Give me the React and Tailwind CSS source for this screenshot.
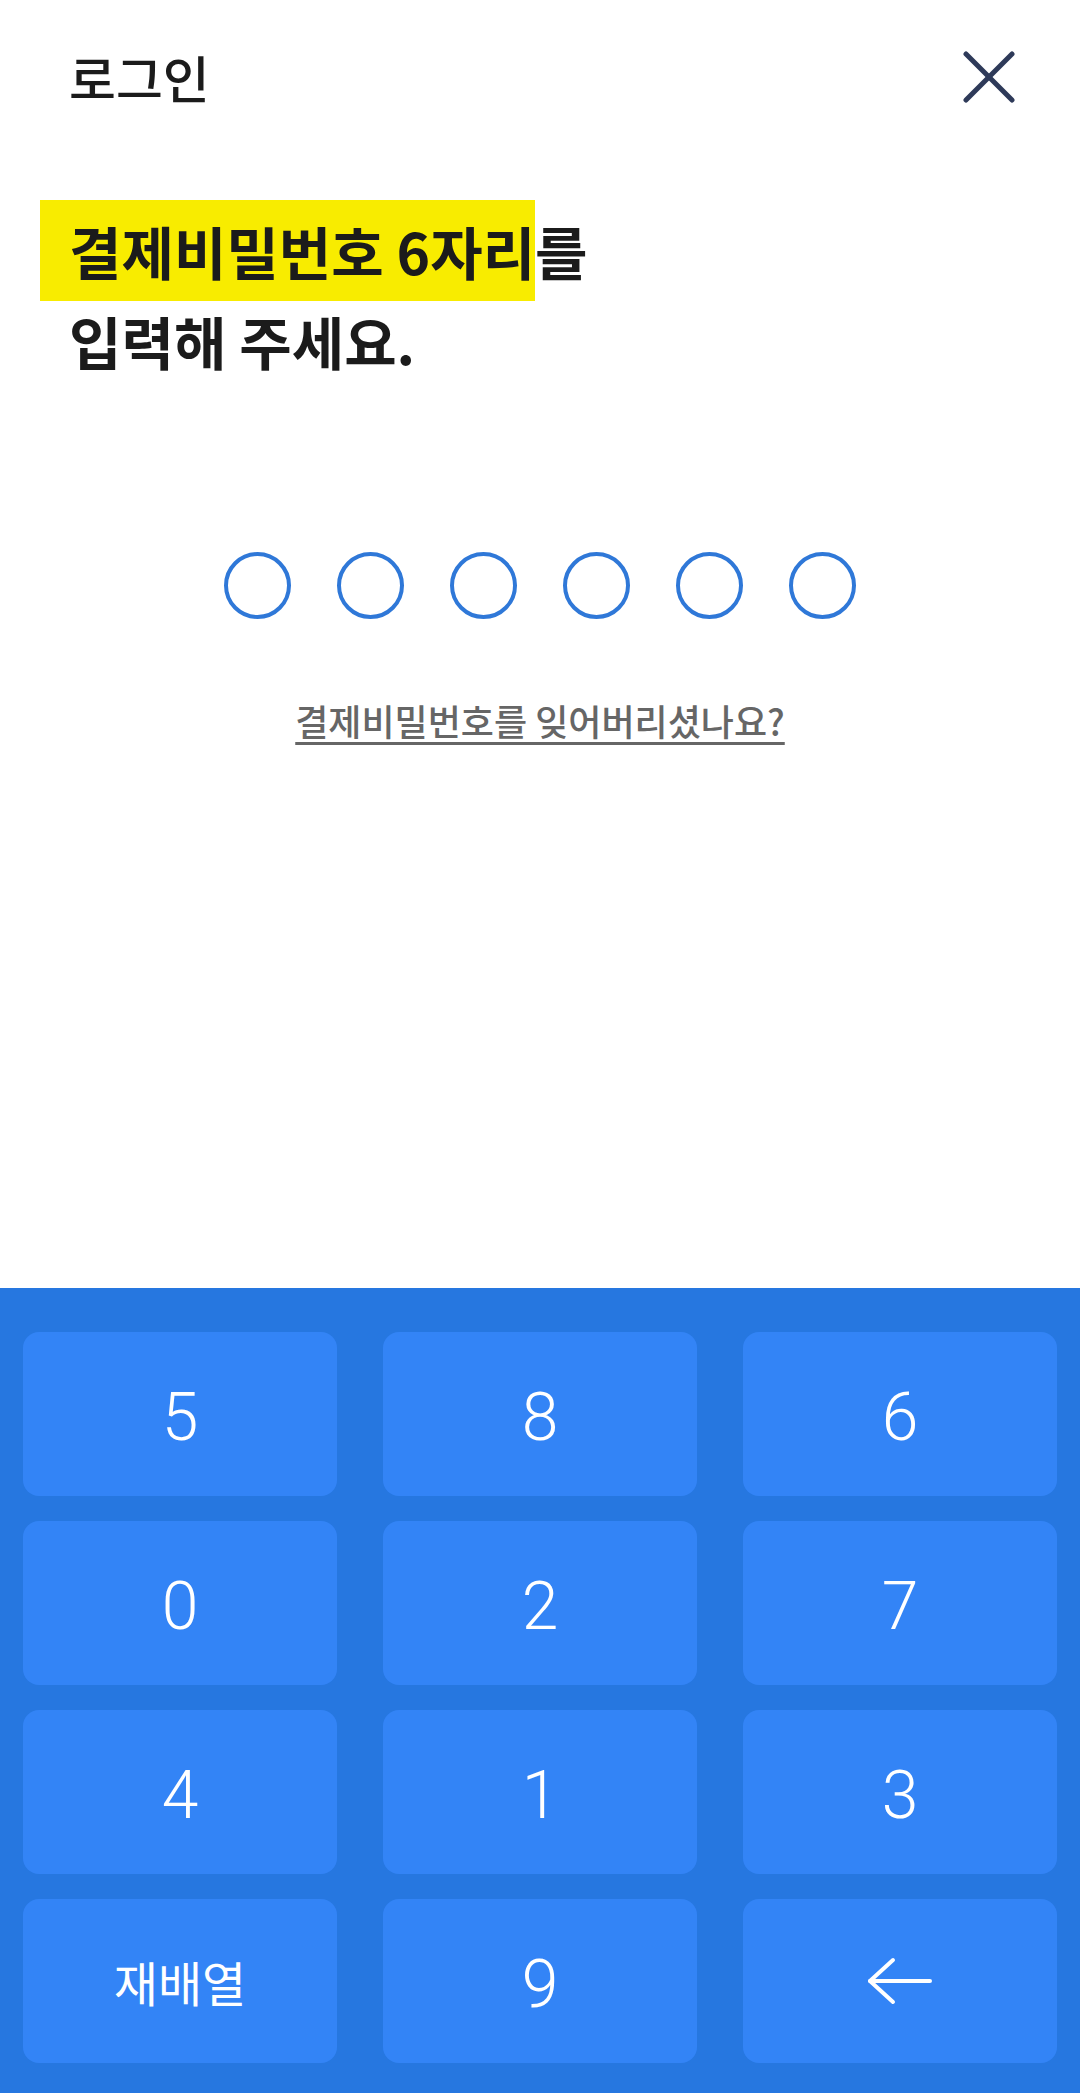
import React from 'react'

const keys = ['5', '8', '6', '0', '2', '7', '4', '1', '3', 'shuffle', '9', 'back']

function Key({ value }) {
  if (value === 'shuffle') {
    return (
      <button className="h-[164px] rounded-[16px] bg-[#3384f6] text-white text-[48px] font-normal flex items-center justify-center" style={{ fontFamily: '"Noto Sans CJK KR", "Noto Sans", sans-serif' }}>
        재배열
      </button>
    )
  }
  if (value === 'back') {
    return (
      <button className="h-[164px] rounded-[16px] bg-[#3384f6] flex items-center justify-center" aria-label="지우기">
        <svg width="66" height="48" viewBox="0 0 66 48" fill="none" stroke="white" strokeWidth="4" strokeLinecap="round" strokeLinejoin="round">
          <path d="M3 24 H63" />
          <path d="M26 3 L3 24 L26 45" />
        </svg>
      </button>
    )
  }
  return (
    <button className="h-[164px] rounded-[16px] bg-[#3384f6] text-white text-[66px] font-light flex items-center justify-center pt-[6px]" style={{ fontFamily: 'Roboto, "Liberation Sans", sans-serif' }}>
      {value}
    </button>
  )
}

export default function App() {
  return (
    <div className="w-[1080px] h-[2093px] bg-white flex flex-col text-[#1b1b1b]" style={{ fontFamily: '"Noto Sans CJK KR", "Noto Sans", sans-serif' }}>
      {/* header */}
      <div className="h-[154px] flex items-center justify-between pl-[69px] pr-[64px]">
        <span className="text-[51px] font-medium">로그인</span>
        <button aria-label="닫기" className="w-[54px] h-[54px] flex items-center justify-center">
          <svg width="52" height="52" viewBox="0 0 52 52" fill="none" stroke="#2e3a59" strokeWidth="5" strokeLinecap="round">
            <path d="M3 3 L49 49" />
            <path d="M49 3 L3 49" />
          </svg>
        </button>
      </div>

      {/* title */}
      <div className="mt-[46px] pl-[69px] text-[57px] font-bold">
        <div className="leading-[101px] h-[101px]">
          <span className="inline-block bg-[#f8ec00] -ml-[29px] pl-[29px]">결제비밀번호 6자리</span>
          <span>를</span>
        </div>
        <div className="leading-[78px]">입력해 주세요.</div>
      </div>

      {/* pin dots */}
      <div className="mt-[173px] flex justify-center gap-[46px]">
        {[0, 1, 2, 3, 4, 5].map((i) => (
          <div key={i} className="w-[67px] h-[67px] rounded-full border-[4px] border-[#2f78d8]" />
        ))}
      </div>

      <div className="mt-[76px] flex justify-center">
        <a href="#" className="text-[36px] leading-[50px] font-medium text-[#666666] underline underline-offset-[6px] decoration-[3px]">
          결제비밀번호를 잊어버리셨나요?
        </a>
      </div>

      {/* keypad */}
      <div className="mt-auto h-[805px] bg-[#2677e0] pt-[44px] px-[23px] pb-[30px] grid grid-cols-3 gap-x-[46px] gap-y-[25px] content-start">
        {keys.map((k) => (
          <Key key={k} value={k} />
        ))}
      </div>
    </div>
  )
}
